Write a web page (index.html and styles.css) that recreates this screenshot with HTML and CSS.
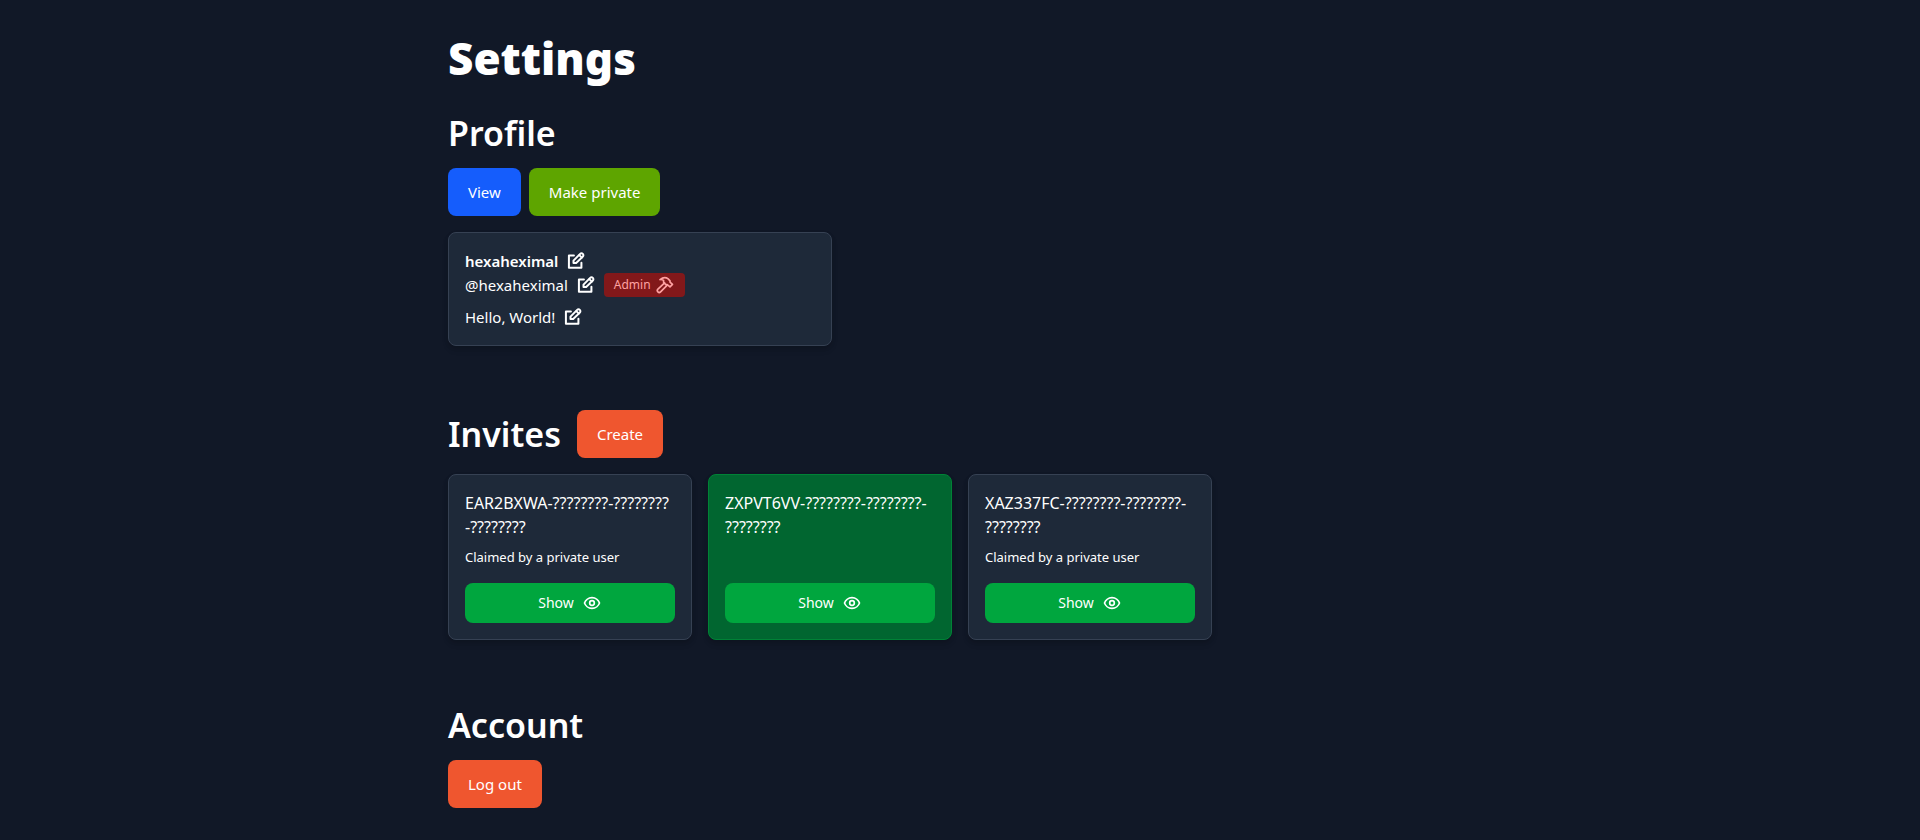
FILE: index.html
```html
<!DOCTYPE html>
<html lang="en">
<head>
  <meta charset="utf-8" />
  <meta name="viewport" content="width=device-width, initial-scale=1" />
  <title>Settings</title>
  <link rel="stylesheet" href="styles.css">
</head>
<body>
  <!-- shared icons -->
  <svg class="sprite" aria-hidden="true">
    <symbol id="icon-edit" viewBox="0 0 24 24">
      <path d="M9.500 5.500H3.500V20H18.500v-6" />
      <path d="M9 14.500v-3l8-8a2.200 2.200 0 0 1 3.200 3.200L12.200 14.500Z" />
      <path d="M16 5l3 3" />
    </symbol>
    <symbol id="icon-hammer" viewBox="0 0 24 24">
      <path d="M11.500 9.500L3.500 17a2.100 2.100 0 0 0 3.200 3.200l8-8" />
      <path d="M6 5.500c3.500-2.700 7.300-2.700 9.800-.800l2.200 2.300v1.500l3 2.700-3 3-3.300-2.700H13L10.300 8.800V6.500C9 5.600 7.600 5.300 6 5.500Z" />
    </symbol>
    <symbol id="icon-eye" viewBox="0 0 24 24">
      <path d="M12 5.500c4.500 0 7.900 3.400 9 6.500-1.100 3.100-4.500 6.500-9 6.500s-7.900-3.400-9-6.500c1.100-3.100 4.500-6.500 9-6.500Z" />
      <circle cx="12" cy="12" r="2.800" />
    </symbol>
  </svg>

  <main class="container">
    <h1>Settings</h1>

    <section>
      <h2>Profile</h2>
      <div class="btn-group">
        <a class="btn btn-blue" href="#profile">View</a>
        <button class="btn btn-lime" type="button">Make private</button>
      </div>

      <div class="card profile" id="profile">
        <div class="row">
          <span class="name">hexaheximal</span>
          <button class="icon-btn" type="button" aria-label="Edit display name"><svg class="icon"><use href="#icon-edit" /></svg></button>
        </div>
        <div class="row">
          <span>@hexaheximal</span>
          <button class="icon-btn" type="button" aria-label="Edit username"><svg class="icon"><use href="#icon-edit" /></svg></button>
          <span class="badge">Admin <svg class="icon"><use href="#icon-hammer" /></svg></span>
        </div>
        <div class="row bio">
          <span>Hello, World!</span>
          <button class="icon-btn" type="button" aria-label="Edit bio"><svg class="icon"><use href="#icon-edit" /></svg></button>
        </div>
      </div>
    </section>

    <section>
      <div class="section-header">
        <h2>Invites</h2>
        <button class="btn btn-orange" type="button">Create</button>
      </div>

      <div class="invites">
        <div class="card invite">
          <p class="code">EAR2BXWA-????????-????????<wbr>-????????</p>
          <p class="claimed">Claimed by a private user</p>
          <button class="btn-show" type="button">Show <svg class="icon"><use href="#icon-eye" /></svg></button>
        </div>
        <div class="card invite unclaimed">
          <p class="code">ZXPVT6VV-????????-????????-<wbr>????????</p>
          <button class="btn-show" type="button">Show <svg class="icon"><use href="#icon-eye" /></svg></button>
        </div>
        <div class="card invite">
          <p class="code">XAZ337FC-????????-????????-<wbr>????????</p>
          <p class="claimed">Claimed by a private user</p>
          <button class="btn-show" type="button">Show <svg class="icon"><use href="#icon-eye" /></svg></button>
        </div>
      </div>
    </section>

    <section>
      <h2>Account</h2>
      <button class="btn btn-orange" type="button">Log out</button>
    </section>
  </main>
</body>
</html>
```
FILE: styles.css
```css
* {
  margin: 0;
  padding: 0;
  box-sizing: border-box;
}

body {
  background-color: #111827;
  color: #fff;
  font-family: "Noto Sans", sans-serif;
  font-size: 15px;
  line-height: 24px;
}

button {
  border: none;
  background: none;
  color: inherit;
  font: inherit;
  cursor: pointer;
}

.sprite {
  display: none;
}

.container {
  max-width: 1024px;
  margin: 0 auto;
  padding: 32px 0;
}

h1 {
  font-size: 44px;
  line-height: 52px;
  font-weight: 900;
  margin-bottom: 28px;
}

h2 {
  font-size: 34px;
  line-height: 42px;
  font-weight: 600;
  margin-bottom: 14px;
}

section + section {
  margin-top: 64px;
}

.section-header {
  display: flex;
  align-items: center;
  gap: 16px;
  margin-bottom: 16px;
}

.section-header h2 {
  margin-bottom: 0;
}

.btn-group {
  display: flex;
  gap: 8px;
  margin-bottom: 16px;
}

.btn {
  padding: 12px 20px;
  border-radius: 8px;
  color: #fff;
  text-decoration: none;
}

.btn-blue {
  background-color: #155dfc;
}

.btn-lime {
  background-color: #5ea500;
}

.btn-orange {
  background-color: #ef562f;
}

.card {
  padding: 16px;
  border: 1px solid #364153;
  border-radius: 8px;
  background-color: #1e2939;
  box-shadow: 0 4px 6px rgba(0, 0, 0, 0.1), 0 2px 4px rgba(0, 0, 0, 0.1);
}

.profile {
  max-width: 384px;
}

.row {
  display: flex;
  align-items: center;
  gap: 8px;
}

.name {
  font-weight: 600;
}

.bio {
  margin-top: 8px;
}

.icon {
  display: block;
  flex-shrink: 0;
  width: 20px;
  height: 20px;
  fill: none;
  stroke: currentColor;
  stroke-width: 2;
  stroke-linejoin: round;
  stroke-linecap: round;
}

.icon-btn .icon {
  stroke-width: 2.4;
}

.badge {
  display: flex;
  align-items: center;
  gap: 4px;
  height: 24px;
  padding: 0 10px;
  border-radius: 4px;
  background-color: #82181a;
  color: #ffa2a2;
  font-size: 12px;
}

.invites {
  display: grid;
  grid-template-columns: repeat(4, 1fr);
  gap: 16px;
}

.invite {
  display: flex;
  flex-direction: column;
}

.unclaimed {
  background-color: #016630;
  border-color: #008236;
}

.code {
  font-size: 16px;
  overflow-wrap: break-word;
}

.claimed {
  margin: 8px 0 16px;
  font-size: 13px;
  line-height: 20px;
}

.btn-show {
  display: flex;
  align-items: center;
  justify-content: center;
  gap: 8px;
  margin-top: auto;
  padding: 10px;
  border-radius: 8px;
  background-color: #00a63e;
  font-size: 14px;
  line-height: 20px;
}
```
